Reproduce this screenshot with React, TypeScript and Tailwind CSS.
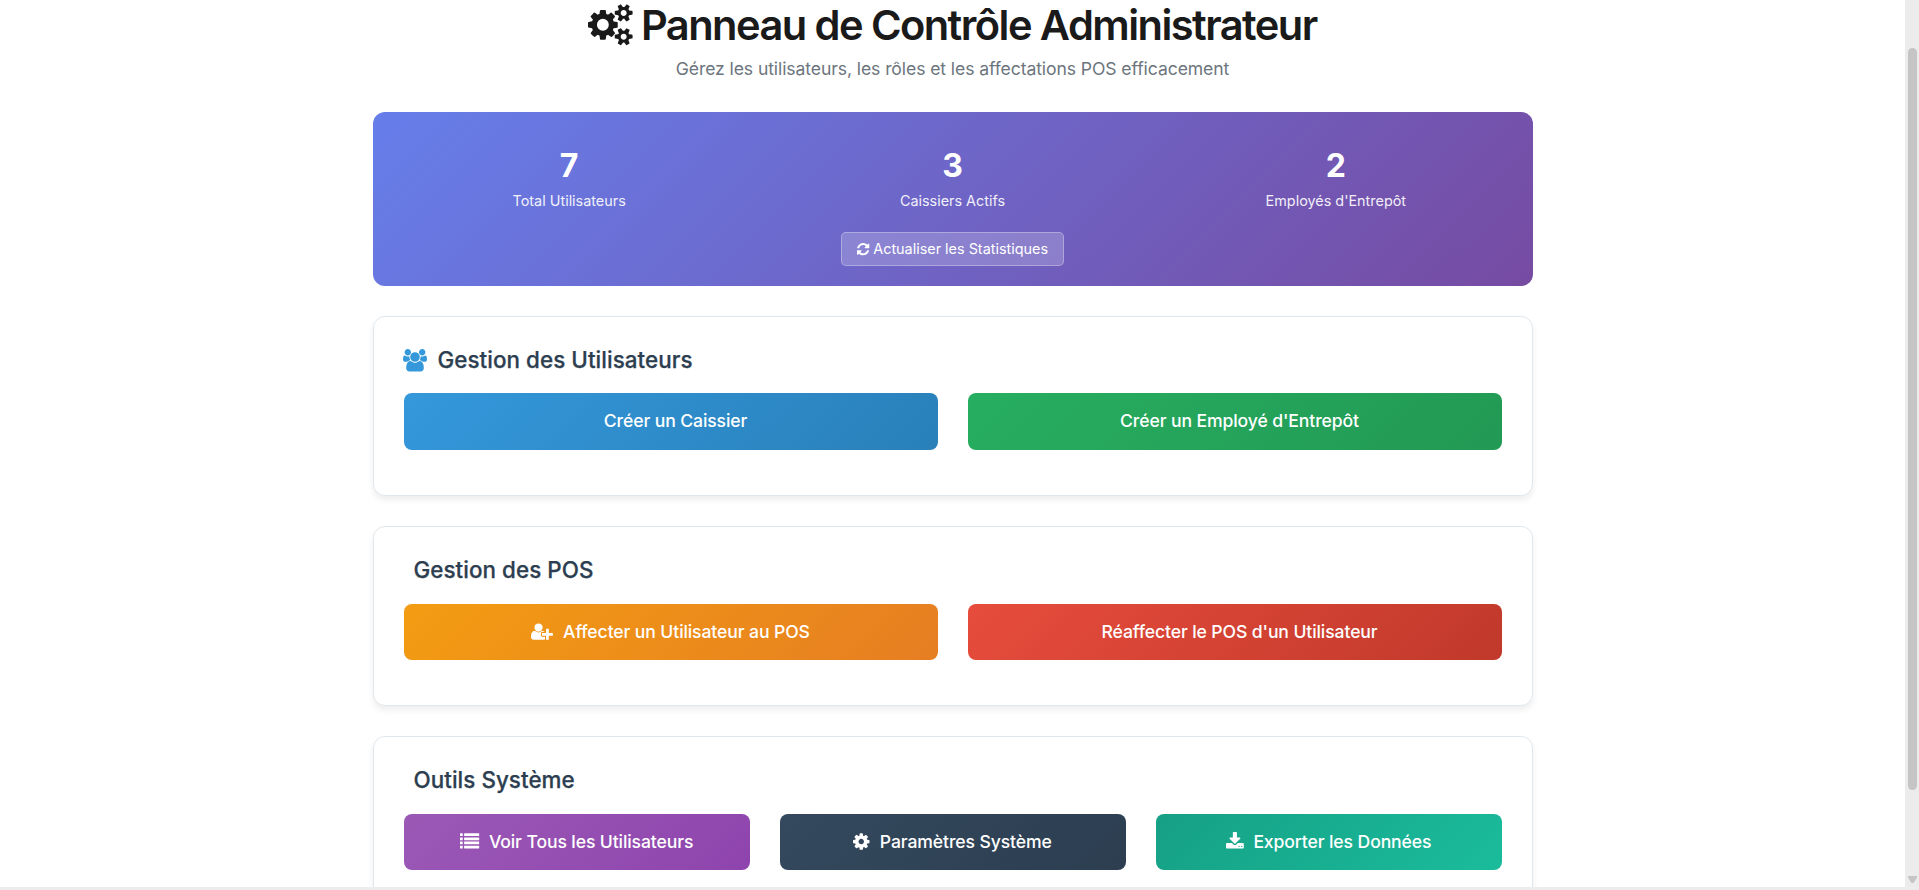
import type { ReactNode } from 'react';

type IconProps = { x?: number; width: number; className: string; children: ReactNode };

/** Glyph on a 1792-unit em grid; `x` and `width` crop it to its advance width. */
function Glyph({ x = 0, width, className, children }: IconProps) {
  return (
    <svg
      viewBox={`${x} 0 ${width} 1792`}
      fill="currentColor"
      aria-hidden="true"
      className={`shrink-0 overflow-visible ${className}`}
    >
      {children}
    </svg>
  );
}

const CogsIcon = ({ className }: { className: string }) => (
  <Glyph width={1920} className={className}>
    <path d="M896 896q0-106-75-181t-181-75-181 75-75 181 75 181 181 75 181-75 75-181zm768 512q0-52-38-90t-90-38-90 38-38 90q0 53 37.5 90.5t90.5 37.5 90.5-37.5 37.5-90.5zm0-1024q0-52-38-90t-90-38-90 38-38 90q0 53 37.5 90.5t90.5 37.5 90.5-37.5 37.5-90.5zm-384 421v185q0 10-7 19.5t-16 10.5l-155 24q-11 35-32 76 34 48 90 115 7 11 7 20 0 12-7 19-23 30-82.5 89.5t-78.5 59.5q-11 0-21-7l-115-90q-37 19-77 31-11 108-23 155-7 24-30 24h-186q-11 0-20-7.5t-10-17.5l-23-153q-34-10-75-31l-118 89q-7 7-20 7-11 0-21-8-144-133-144-160 0-9 7-19 10-14 41-53t47-61q-23-44-35-82l-152-24q-10-1-17-9.5t-7-19.5v-185q0-10 7-19.5t16-10.5l155-24q11-35 32-76-34-48-90-115-7-11-7-20 0-12 7-20 22-30 82-89t79-59q11 0 21 7l115 90q34-18 77-32 11-108 23-154 7-24 30-24h186q11 0 20 7.5t10 17.5l23 153q34 10 75 31l118-89q8-7 20-7 11 0 21 8 144 133 144 160 0 8-7 19-12 16-42 54t-45 60q23 48 34 82l152 23q10 2 17 10.5t7 19.5zm640 533v140q0 16-149 31-12 27-30 52 51 113 51 138 0 4-4 7-122 71-124 71-8 0-46-47t-52-68q-20 2-30 2t-30-2q-14 21-52 68t-46 47q-2 0-124-71-4-3-4-7 0-25 51-138-18-25-30-52-149-15-149-31v-140q0-16 149-31 13-29 30-52-51-113-51-138 0-4 4-7 4-2 35-20t59-34 30-16q8 0 46 46.5t52 67.5q20-2 30-2t30 2q51-71 92-112l6-2q4 0 124 70 4 3 4 7 0 25-51 138 17 23 30 52 149 15 149 31zm0-1024v140q0 16-149 31-12 27-30 52 51 113 51 138 0 4-4 7-122 71-124 71-8 0-46-47t-52-68q-20 2-30 2t-30-2q-14 21-52 68t-46 47q-2 0-124-71-4-3-4-7 0-25 51-138-18-25-30-52-149-15-149-31v-140q0-16 149-31 13-29 30-52-51-113-51-138 0-4 4-7 4-2 35-20t59-34 30-16q8 0 46 46.5t52 67.5q20-2 30-2t30 2q51-71 92-112l6-2q4 0 124 70 4 3 4 7 0 25-51 138 17 23 30 52 149 15 149 31z" />
  </Glyph>
);

const RefreshIcon = ({ className }: { className: string }) => (
  <Glyph x={128} width={1536} className={className}>
    <path d="M1639 1056q0 5-1 7-64 268-268 434.5t-478 166.5q-146 0-282.5-55t-243.5-157l-129 129q-19 19-45 19t-45-19-19-45v-448q0-26 19-45t45-19h448q26 0 45 19t19 45-19 45l-137 137q71 66 161 102t187 36q134 0 250-65t186-179q11-17 53-117 8-23 30-23h192q13 0 22.5 9.5t9.5 22.5zm25-800v448q0 26-19 45t-45 19h-448q-26 0-45-19t-19-45 19-45l138-138q-148-137-349-137-134 0-250 65t-186 179q-11 17-53 117-8 23-30 23h-199q-13 0-22.5-9.5t-9.5-22.5v-7q65-268 270-434.5t480-166.5q146 0 284 55.5t245 156.5l130-129q19-19 45-19t45 19 19 45z" />
  </Glyph>
);

const UsersIcon = ({ className }: { className: string }) => (
  <Glyph x={64} width={1920} className={className}>
    <path d="M657 896q-162 5-265 128h-134q-82 0-138-40.5t-56-118.5q0-353 124-353 6 0 43.5 21t97.5 42.5 119 21.5q67 0 133-23-5 37-5 66 0 139 81 256zm1071 637q0 120-73 189.5t-194 69.5h-874q-121 0-194-69.5t-73-189.5q0-53 3.5-103.5t14-109 26.5-108.5 43-97.5 62-81 85.5-53.5 111.5-20q10 0 43 21.5t73 48 107 48 135 21.5 135-21.5 107-48 73-48 43-21.5q61 0 111.5 20t85.5 53.5 62 81 43 97.5 26.5 108.5 14 109 3.5 103.5zm-1024-1277q0 106-75 181t-181 75-181-75-75-181 75-181 181-75 181 75 75 181zm704 384q0 159-112.5 271.5t-271.5 112.5-271.5-112.5-112.5-271.5 112.5-271.5 271.5-112.5 271.5 112.5 112.5 271.5zm576 225q0 78-56 118.5t-138 40.5h-134q-103-123-265-128 81-117 81-256 0-29-5-66 66 23 133 23 59 0 119-21.5t97.5-42.5 43.5-21q124 0 124 353zm-128-609q0 106-75 181t-181 75-181-75-75-181 75-181 181-75 181 75 75 181z" />
  </Glyph>
);

const UserPlusIcon = ({ className }: { className: string }) => (
  <Glyph width={2048} className={className}>
    <path d="M704 896q-159 0-271.5-112.5t-112.5-271.5 112.5-271.5 271.5-112.5 271.5 112.5 112.5 271.5-112.5 271.5-271.5 112.5zm960 128h352q13 0 22.5 9.5t9.5 22.5v192q0 13-9.5 22.5t-22.5 9.5h-352v352q0 13-9.5 22.5t-22.5 9.5h-192q-13 0-22.5-9.5t-9.5-22.5v-352h-352q-13 0-22.5-9.5t-9.5-22.5v-192q0-13 9.5-22.5t22.5-9.5h352v-352q0-13 9.5-22.5t22.5-9.5h192q13 0 22.5 9.5t9.5 22.5v352zm-736 224q0 52 38 90t90 38h256v238q-68 50-171 50h-874q-121 0-194-69t-73-190q0-53 3.5-103.5t14-109 26.5-108.5 43-97.5 62-81 85.5-53.5 111.5-20q19 0 39 17 79 61 154.5 91.5t164.5 30.5 164.5-30.5 154.5-91.5q20-17 39-17 132 0 217 96h-223q-52 0-90 38t-38 90v192z" />
  </Glyph>
);

const ListIcon = ({ className }: { className: string }) => (
  <Glyph width={1792} className={className}>
    {[128, 512, 896, 1280].map((y) => (
      <g key={y}>
        <rect x="0" y={y} width="256" height="256" rx="32" />
        <rect x="384" y={y} width="1408" height="256" rx="32" />
      </g>
    ))}
  </Glyph>
);

const CogIcon = ({ className }: { className: string }) => (
  <Glyph x={128} width={1536} className={className}>
    <path d="M1152 896q0-106-75-181t-181-75-181 75-75 181 75 181 181 75 181-75 75-181zm512-109v222q0 12-8 23t-20 13l-185 28q-19 54-39 91 35 50 107 138 10 12 10 25t-9 23q-27 37-99 108t-94 71q-12 0-26-9l-138-108q-44 23-91 38-16 136-29 186-7 28-36 28h-222q-14 0-24.5-8.5t-11.5-21.5l-28-184q-49-16-90-37l-141 107q-10 9-25 9-14 0-25-11-126-114-165-168-7-10-7-23 0-12 8-23 15-21 51-66.5t54-70.5q-27-50-41-99l-183-27q-13-2-21-12.5t-8-23.5v-222q0-12 8-23t19-13l186-28q14-46 39-92-40-57-107-138-10-12-10-24 0-10 9-23 26-36 98.5-107.5t94.5-71.5q13 0 26 10l138 107q44-23 91-38 16-136 29-186 7-28 36-28h222q14 0 24.5 8.5t11.5 21.5l28 184q49 16 90 37l142-107q9-9 24-9 13 0 25 10 129 119 165 170 7 8 7 22 0 12-8 23-15 21-51 66.5t-54 70.5q26 50 41 98l183 28q13 2 21 12.5t8 23.5z" />
  </Glyph>
);

const DownloadIcon = ({ className }: { className: string }) => (
  <Glyph x={64} width={1664} className={className}>
    <path d="M1344 1344q0-26-19-45t-45-19-45 19-19 45 19 45 45 19 45-19 19-45zm256 0q0-26-19-45t-45-19-45 19-19 45 19 45 45 19 45-19 19-45zm128-224v320q0 40-28 68t-68 28h-1472q-40 0-68-28t-28-68v-320q0-40 28-68t68-28h465l135 136q58 56 136 56t136-56l136-136h464q40 0 68 28t28 68zm-325-569q17 41-14 70l-448 448q-18 19-45 19t-45-19l-448-448q-31-29-14-70 17-39 59-39h256v-448q0-26 19-45t45-19h256q26 0 45 19t19 45v448h256q42 0 59 39z" />
  </Glyph>
);

const stats = [
  { value: '7', label: 'Total Utilisateurs' },
  { value: '3', label: 'Caissiers Actifs' },
  { value: '2', label: "Employés d'Entrepôt" },
];

function Section({ icon, title, children }: { icon?: ReactNode; title: string; children: ReactNode }) {
  return (
    <section className="h-[180.2px] shrink-0 rounded-xl border border-[#e1e8ed] bg-white px-[30px] pt-[29px] shadow-[0_4px_6px_rgba(0,0,0,0.07)]">
      <h3 className="mb-[20.4px] flex h-[27px] items-center text-[22.4px] font-medium leading-[27px] tracking-[0.05px] text-[#2c3e50]">
        {icon}
        <span className="ml-[10px] [-webkit-text-stroke:0.25px_#2c3e50]">{title}</span>
      </h3>
      {children}
    </section>
  );
}

function Action({ icon, label, tone }: { icon?: ReactNode; label: string; tone: string }) {
  return (
    <button
      className={`flex h-[56.4px] items-center justify-center gap-[10px] rounded-lg pb-[1.3px] text-[17.6px] font-medium leading-[21px] tracking-[-0.11px] text-white ${tone}`}
    >
      {icon ?? <span />}
      <span>{label}</span>
    </button>
  );
}

export default function App() {
  return (
    <div className="flex h-[890px] w-full flex-col overflow-hidden bg-white font-['Inter',sans-serif]">
      <div className="flex min-h-0 flex-1">
        <main className="flex min-w-0 flex-1 justify-center overflow-hidden">
          <div className="flex w-[1160px] flex-col gap-[30px]">
            <header className="flex h-[82px] shrink-0 flex-col items-center">
              <h1 className="flex h-[50px] items-center text-[41.6px] font-semibold leading-[50px] tracking-[-0.0375em] text-[#1a1a1a]">
                <CogsIcon className="mr-[8px] h-[41.6px] w-[44.6px]" />
                Panneau de Contrôle Administrateur
              </h1>
              <p className="mt-[6px] text-[17.6px] leading-[26px] tracking-[-0.1px] text-[#6c757d]">
                Gérez les utilisateurs, les rôles et les affectations POS efficacement
              </p>
            </header>

            <section className="flex h-[174px] shrink-0 flex-col items-center rounded-xl bg-[linear-gradient(135deg,#667eea_0%,#764ba2_100%)] px-5 pt-[31px] text-white">
              <div className="grid w-full grid-cols-3 gap-[30px]">
                {stats.map((s) => (
                  <div key={s.label} className="flex flex-col items-center">
                    <div className="text-[32px] font-bold leading-[46px]">{s.value}</div>
                    <div className="text-[14.4px] leading-[23px] opacity-90">{s.label}</div>
                  </div>
                ))}
              </div>
              <button className="mt-[20px] flex h-[34px] items-center gap-1 rounded-[5px] border border-white/30 bg-white/20 px-[15px] text-[14.4px]">
                <RefreshIcon className="h-[14.4px] w-[12.3px]" />
                Actualiser les Statistiques
              </button>
            </section>

            <Section
              icon={<UsersIcon className="mt-[1px] -ml-[0.5px] mr-[0.5px] h-[22.4px] w-[24px] text-[#3498db]" />}
              title="Gestion des Utilisateurs"
            >
              <div className="grid grid-cols-2 gap-[30px]">
                <Action label="Créer un Caissier" tone="bg-[linear-gradient(135deg,#3498db,#2980b9)]" />
                <Action label="Créer un Employé d'Entrepôt" tone="bg-[linear-gradient(135deg,#27ae60,#229954)]" />
              </div>
            </Section>

            <Section title="Gestion des POS">
              <div className="grid grid-cols-2 gap-[30px]">
                <Action
                  icon={<UserPlusIcon className="h-[19.2px] w-[21.9px]" />}
                  label="Affecter un Utilisateur au POS"
                  tone="bg-[linear-gradient(135deg,#f39c12,#e67e22)]"
                />
                <Action label="Réaffecter le POS d'un Utilisateur" tone="bg-[linear-gradient(135deg,#e74c3c,#c0392b)]" />
              </div>
            </Section>

            <Section title="Outils Système">
              <div className="grid grid-cols-3 gap-[30px]">
                <Action
                  icon={<ListIcon className="h-[19.2px] w-[19.2px]" />}
                  label="Voir Tous les Utilisateurs"
                  tone="bg-[linear-gradient(135deg,#9b59b6,#8e44ad)]"
                />
                <Action
                  icon={<CogIcon className="h-[19.2px] w-[16.5px]" />}
                  label="Paramètres Système"
                  tone="bg-[linear-gradient(135deg,#34495e,#2c3e50)]"
                />
                <Action
                  icon={<DownloadIcon className="h-[19.2px] w-[17.8px]" />}
                  label="Exporter les Données"
                  tone="bg-[linear-gradient(135deg,#16a085,#1abc9c)]"
                />
              </div>
            </Section>
          </div>
        </main>
        <div className="flex w-[14px] shrink-0 flex-col items-center bg-[#ececec] pt-12 pb-1">
          <div className="h-[742px] w-[9px] rounded-full bg-[#c5c5c5]" />
          <svg viewBox="0 0 9 7" className="mt-auto h-[7px] w-[9px]" fill="#c5c5c5" aria-hidden="true">
            <path d="M0 0h9v1.5L5.5 7h-2L0 1.5z" />
          </svg>
        </div>
      </div>
      <div className="h-[3px] shrink-0 bg-[#ededed]" />
    </div>
  );
}
